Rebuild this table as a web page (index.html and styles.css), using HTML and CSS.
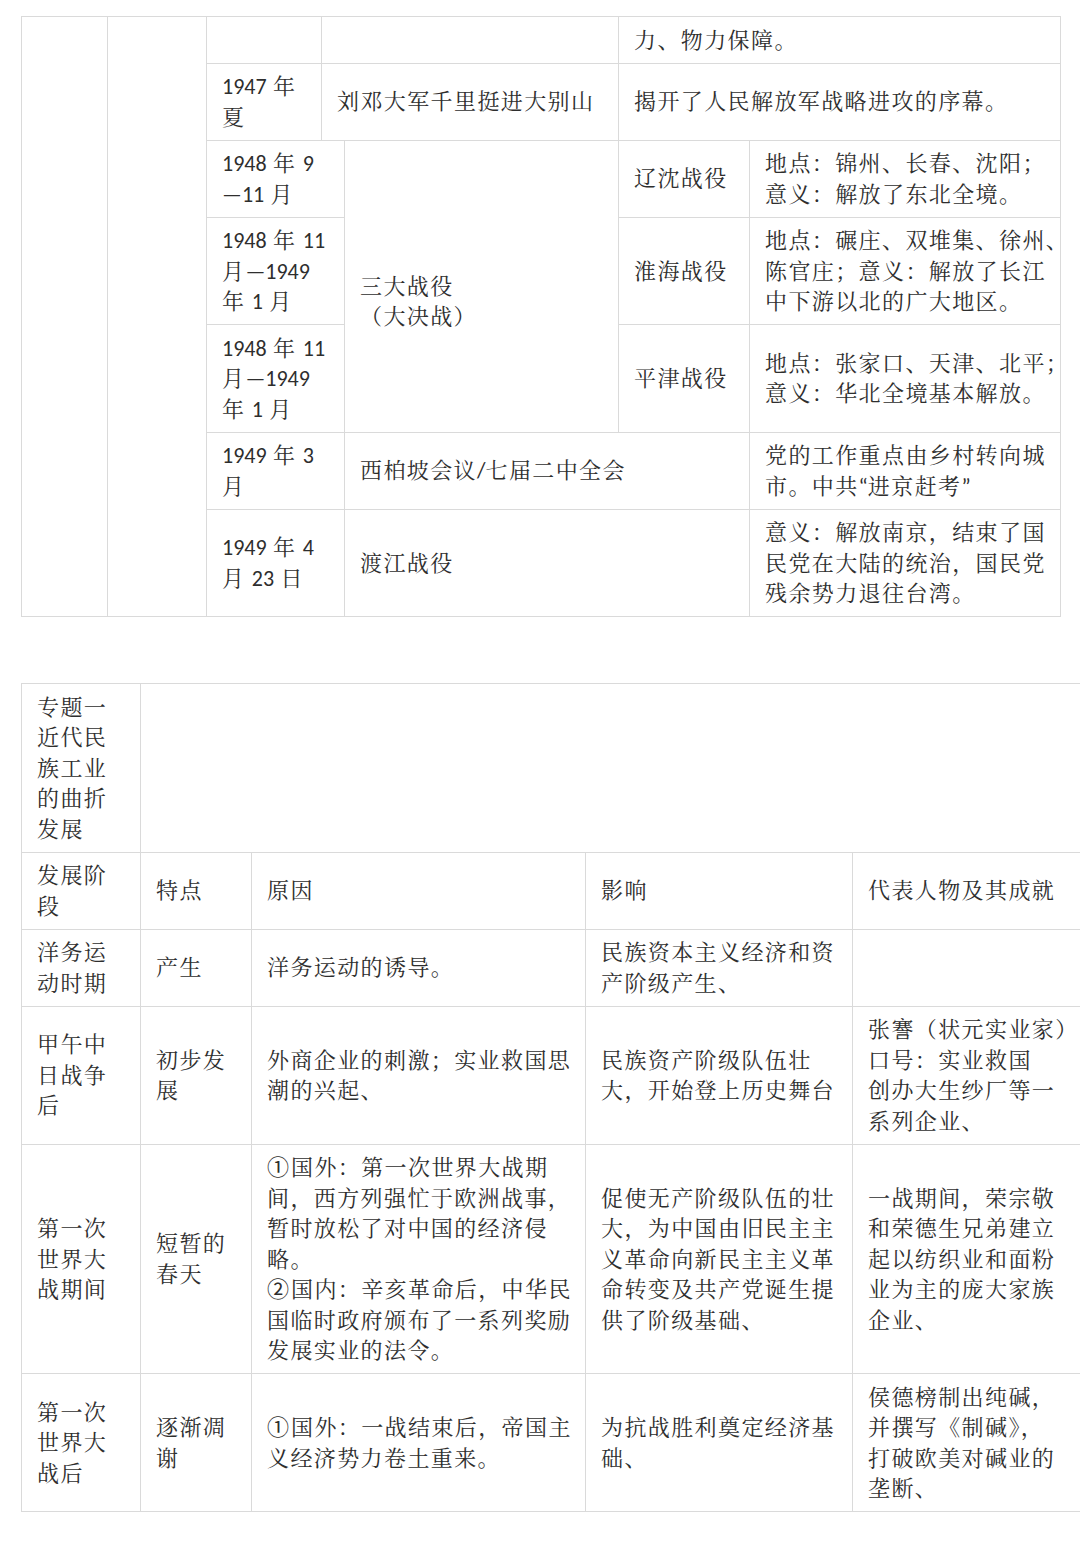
FILE: index.html
```html
<!DOCTYPE html>
<html lang="zh-CN">
<head>
<meta charset="utf-8">
<title>中国近代史表格</title>
<link rel="stylesheet" href="styles.css">
</head>
<body>
<div class="page">
  <table class="t1">
    <colgroup>
      <col class="a1"><col class="a2"><col class="a3"><col class="a4"><col class="a5"><col class="a6"><col class="a7">
    </colgroup>
    <tr>
      <td rowspan="7"></td>
      <td rowspan="7"></td>
      <td></td>
      <td colspan="2"></td>
      <td colspan="2">力、物力保障。</td>
    </tr>
    <tr>
      <td><span class="num">1947</span> 年<br>夏</td>
      <td colspan="2">刘邓大军千里挺进大别山</td>
      <td colspan="2">揭开了人民解放军战略进攻的序幕。</td>
    </tr>
    <tr>
      <td colspan="2"><span class="num">1948</span> 年 <span class="num">9</span><br><span class="num">—11</span> 月</td>
      <td rowspan="3" class="shift">三大战役<br>（大决战）</td>
      <td>辽沈战役</td>
      <td>地点：锦州、长春、沈阳；<br>意义：解放了东北全境。</td>
    </tr>
    <tr>
      <td colspan="2"><span class="num">1948</span> 年 <span class="num">11</span><br>月<span class="num">—1949</span><br>年 <span class="num">1</span> 月</td>
      <td>淮海战役</td>
      <td>地点：碾庄、双堆集、徐州、<br>陈官庄；意义：解放了长江<br>中下游以北的广大地区。</td>
    </tr>
    <tr>
      <td colspan="2"><span class="num">1948</span> 年 <span class="num">11</span><br>月<span class="num">—1949</span><br>年 <span class="num">1</span> 月</td>
      <td>平津战役</td>
      <td>地点：张家口、天津、北平；<br>意义：华北全境基本解放。</td>
    </tr>
    <tr>
      <td colspan="2"><span class="num">1949</span> 年 <span class="num">3</span><br>月</td>
      <td colspan="2">西柏坡会议<span class="num">/</span>七届二中全会</td>
      <td>党的工作重点由乡村转向城<br>市。中共<span class="num">“</span>进京赶考<span class="num">”</span></td>
    </tr>
    <tr>
      <td colspan="2"><span class="num">1949</span> 年 <span class="num">4</span><br>月 <span class="num">23</span> 日</td>
      <td colspan="2">渡江战役</td>
      <td>意义：解放南京，结束了国<br>民党在大陆的统治，国民党<br>残余势力退往台湾。</td>
    </tr>
  </table>

  <div class="wrap2">
    <table class="t2">
      <colgroup>
        <col class="b1"><col class="b2"><col class="b3"><col class="b4"><col class="b5">
      </colgroup>
      <tr>
        <td>专题一<br>近代民<br>族工业<br>的曲折<br>发展</td>
        <td colspan="4"></td>
      </tr>
      <tr>
        <td>发展阶<br>段</td>
        <td>特点</td>
        <td>原因</td>
        <td>影响</td>
        <td>代表人物及其成就</td>
      </tr>
      <tr>
        <td>洋务运<br>动时期</td>
        <td>产生</td>
        <td>洋务运动的诱导。</td>
        <td>民族资本主义经济和资<br>产阶级产生、</td>
        <td></td>
      </tr>
      <tr>
        <td>甲午中<br>日战争<br>后</td>
        <td>初步发<br>展</td>
        <td>外商企业的刺激；实业救国思<br>潮的兴起、</td>
        <td>民族资产阶级队伍壮<br>大，开始登上历史舞台</td>
        <td>张謇（状元实业家）<br>口号：实业救国<br>创办大生纱厂等一<br>系列企业、</td>
      </tr>
      <tr>
        <td>第一次<br>世界大<br>战期间</td>
        <td>短暂的<br>春天</td>
        <td><span class="circ">①</span>国外：第一次世界大战期<br>间，西方列强忙于欧洲战事，<br>暂时放松了对中国的经济侵<br>略。<br><span class="circ">②</span>国内：辛亥革命后，中华民<br>国临时政府颁布了一系列奖励<br>发展实业的法令。</td>
        <td>促使无产阶级队伍的壮<br>大，为中国由旧民主主<br>义革命向新民主主义革<br>命转变及共产党诞生提<br>供了阶级基础、</td>
        <td>一战期间，荣宗敬<br>和荣德生兄弟建立<br>起以纺织业和面粉<br>业为主的庞大家族<br>企业、</td>
      </tr>
      <tr>
        <td>第一次<br>世界大<br>战后</td>
        <td>逐渐凋<br>谢</td>
        <td><span class="circ">①</span>国外：一战结束后，帝国主<br>义经济势力卷土重来。</td>
        <td>为抗战胜利奠定经济基<br>础、</td>
        <td>侯德榜制出纯碱，<br>并撰写《制碱》，<br>打破欧美对碱业的<br>垄断、</td>
      </tr>
    </table>
  </div>
</div>
</body>
</html>
```

FILE: styles.css
```css
html, body {
  margin: 0;
  padding: 0;
  background: #ffffff;
}

body {
  font-family: Carlito, Lato, "Noto Serif CJK SC", "Noto Sans CJK SC", sans-serif;
  font-size: 22px;
  color: #2e2e2e;
  overflow: hidden;
}

.page {
  padding-top: 16px;
  width: 1080px;
}

table {
  border-collapse: collapse;
  table-layout: fixed;
}

td {
  border: 1px solid #dadada;
  padding: 8.5px 15px 6.5px;
  line-height: 30.5px;
  vertical-align: middle;
  text-align: left;
  white-space: nowrap;
  letter-spacing: 1.4px;
}

.num {
  letter-spacing: 0;
}

.circ {
  font-family: "Noto Sans CJK SC", sans-serif;
  font-size: 22px;
  line-height: 20px;
  letter-spacing: 2px;
}

.shift {
  padding-top: 39px;
}

/* table 1 */
.t1 {
  width: 1040px;
  margin-left: 21px;
}
.a1 { width: 86px; }
.a2 { width: 99px; }
.a3 { width: 115px; }
.a4 { width: 23px; }
.a5 { width: 274px; }
.a6 { width: 131px; }
.a7 { width: 311px; }

/* table 2 */
.wrap2 {
  width: 1080px;
  overflow: hidden;
  margin-top: 66px;
}
.t2 {
  width: 1082px;
  margin-left: 21px;
}
.b1 { width: 119px; }
.b2 { width: 111px; }
.b3 { width: 334px; }
.b4 { width: 267px; }
.b5 { width: 251px; }
```
